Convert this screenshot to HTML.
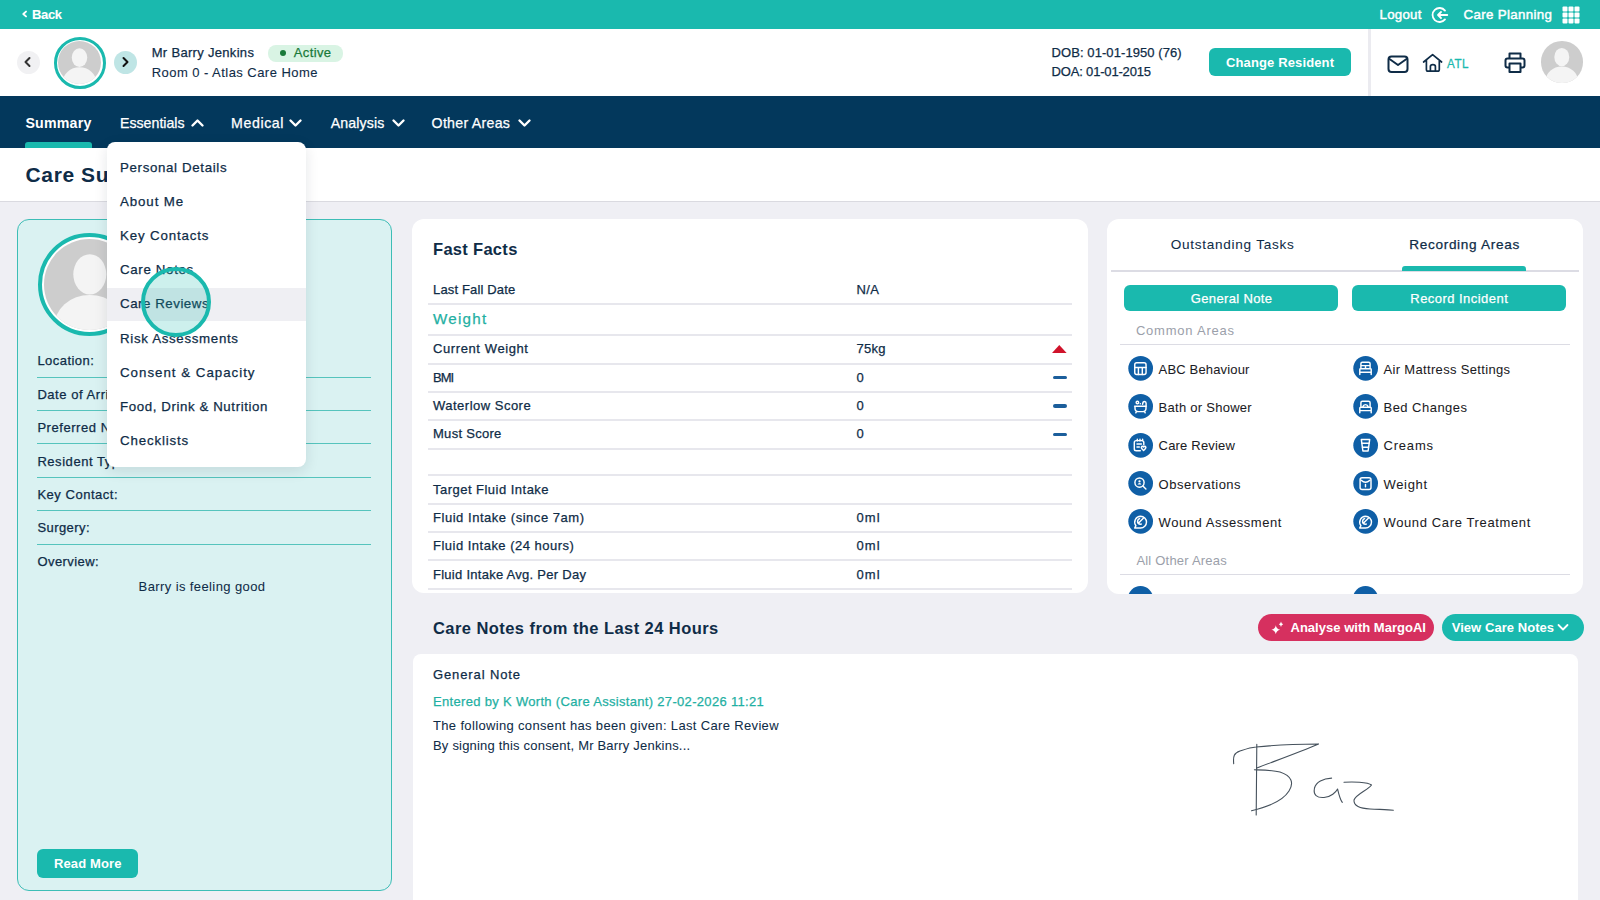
<!DOCTYPE html>
<html><head><meta charset="utf-8">
<style>
*{box-sizing:border-box;margin:0;padding:0}
html,body{width:1600px;height:900px;overflow:hidden}
body{position:relative;background:#efeff4;font-family:"Liberation Sans",sans-serif;color:#0f2c47}
.a{position:absolute}
.t{position:absolute;white-space:nowrap;line-height:1}
</style></head><body>
<div class="a" style="left:0px;top:0px;width:1600px;height:29px;background:#1ab9ae"></div>
<svg class="a" style="left:20px;top:9px;" width="10" height="10" viewBox="0 0 10 10"><polyline points="6,2.6 3.3,5 6,7.4" fill="none" stroke="#fff" stroke-width="1.9" stroke-linecap="round" stroke-linejoin="round"/></svg>
<div class="t" style="left:32.00px;top:8.00px;font-size:13px;letter-spacing:-0.367px;font-weight:bold;color:#fff;-webkit-text-stroke:0.1px currentColor">Back</div>
<div class="t" style="left:1379.50px;top:8.00px;font-size:13.3px;letter-spacing:0.260px;color:#fff;-webkit-text-stroke:0.45px currentColor">Logout</div>
<svg class="a" style="left:1431px;top:6px;" width="18" height="18" viewBox="0 0 18 18"><path d="M14 4.6A7 7 0 1 0 14 13.4" fill="none" stroke="#fff" stroke-width="1.8" stroke-linecap="round"/><path d="M16.3 9H7M10 6L7 9L10 12" fill="none" stroke="#fff" stroke-width="1.8" stroke-linecap="round" stroke-linejoin="round"/></svg>
<div class="t" style="left:1463.50px;top:8.00px;font-size:13.3px;letter-spacing:0.350px;color:#fff;-webkit-text-stroke:0.45px currentColor">Care Planning</div>
<svg class="a" style="left:1562px;top:6px;" width="18" height="18" viewBox="0 0 18 18"><rect x="0.5" y="0.5" width="5" height="5" rx="1" fill="#fff"/><rect x="6.5" y="0.5" width="5" height="5" rx="1" fill="#fff"/><rect x="12.5" y="0.5" width="5" height="5" rx="1" fill="#fff"/><rect x="0.5" y="6.5" width="5" height="5" rx="1" fill="#fff"/><rect x="6.5" y="6.5" width="5" height="5" rx="1" fill="#fff"/><rect x="12.5" y="6.5" width="5" height="5" rx="1" fill="#fff"/><rect x="0.5" y="12.5" width="5" height="5" rx="1" fill="#fff"/><rect x="6.5" y="12.5" width="5" height="5" rx="1" fill="#fff"/><rect x="12.5" y="12.5" width="5" height="5" rx="1" fill="#fff"/></svg>
<div class="a" style="left:0px;top:29px;width:1600px;height:67px;background:#fff"></div>
<div class="a" style="left:1368px;top:29px;width:3px;height:67px;background:#ebebf0"></div>
<div class="a" style="left:16.5px;top:50.5px;width:23.0px;height:23.0px;background:#f1f1f3;border-radius:50%"></div>
<svg class="a" style="left:22px;top:56px;" width="12" height="12" viewBox="0 0 12 12"><polyline points="7.5,2 3.5,6 7.5,10" fill="none" stroke="#333" stroke-width="2" stroke-linecap="round" stroke-linejoin="round"/></svg>
<div class="a" style="left:114px;top:50.5px;width:23px;height:23.0px;background:#bfe5e5;border-radius:50%"></div>
<svg class="a" style="left:119px;top:56px;" width="12" height="12" viewBox="0 0 12 12"><polyline points="4.5,2 8.5,6 4.5,10" fill="none" stroke="#111" stroke-width="2" stroke-linecap="round" stroke-linejoin="round"/></svg>
<div class="a" style="left:53.50px;top:36.80px;width:52.00px;height:52.00px;border-radius:50%;border:3px solid #1ab9ae;background:#fff"></div>
<div class="a" style="left:58.00px;top:41.30px;width:43.00px;height:43.00px;border-radius:50%;overflow:hidden;background:#cdcdcd"><svg width="43.00" height="43.00" style="display:block" fill="#f4f4f4"><ellipse cx="21.5" cy="16.598" rx="7.74" ry="9.459999999999999"/><ellipse cx="21.5" cy="41.28" rx="16.77" ry="15.049999999999999"/></svg></div>
<div class="t" style="left:151.70px;top:46.00px;font-size:13px;letter-spacing:0.313px;-webkit-text-stroke:0.25px currentColor">Mr Barry Jenkins</div>
<div class="a" style="left:268px;top:44.6px;width:75px;height:17.0px;background:#d9f4e4;border-radius:8px"></div>
<div class="a" style="left:280px;top:50.3px;width:6px;height:6.0px;background:#1a7a3a;border-radius:50%"></div>
<div class="t" style="left:293.80px;top:46.00px;font-size:13px;letter-spacing:0.360px;color:#1a7a3a;-webkit-text-stroke:0.25px currentColor">Active</div>
<div class="t" style="left:151.70px;top:66.00px;font-size:13px;letter-spacing:0.452px;-webkit-text-stroke:0.1px currentColor">Room 0 - Atlas Care Home</div>
<div class="t" style="left:1051.60px;top:46.00px;font-size:13px;letter-spacing:0.074px;-webkit-text-stroke:0.25px currentColor">DOB: 01-01-1950 (76)</div>
<div class="t" style="left:1051.60px;top:65.00px;font-size:13px;letter-spacing:-0.179px;-webkit-text-stroke:0.25px currentColor">DOA: 01-01-2015</div>
<div class="a" style="left:1209px;top:48px;width:142px;height:28.400000000000006px;background:#1ab9ae;border-radius:6px"></div>
<div class="t" style="left:1226.00px;top:56.00px;font-size:13px;letter-spacing:0.129px;font-weight:bold;color:#fff">Change Resident</div>
<svg class="a" style="left:1386px;top:53px;" width="24" height="22" viewBox="0 0 24 22"><rect x="2.5" y="3.5" width="19" height="15.5" rx="3" fill="none" stroke="#0f2c47" stroke-width="2"/><polyline points="3.5,6 12,12 20.5,6" fill="none" stroke="#0f2c47" stroke-width="2" stroke-linejoin="round" stroke-linecap="round"/></svg>
<svg class="a" style="left:1421px;top:52px;" width="23" height="22" viewBox="0 0 23 22"><path d="M2.6 10L11.6 2.6L20.6 10M5.4 8.2V17.4Q5.4 19.1 7.1 19.1H16.6Q18.3 19.1 18.3 17.4V8.2" fill="none" stroke="#0f2c47" stroke-width="1.7" stroke-linejoin="round" stroke-linecap="round"/><path d="M9.4 19.1V14.5Q9.4 12.6 11.9 12.6Q14.4 12.6 14.4 14.5V19.1" fill="none" stroke="#0f2c47" stroke-width="1.7"/></svg>
<div class="t" style="left:1447px;top:57px;font-size:13.5px;letter-spacing:0.6px;color:#1ab9ae;-webkit-text-stroke:0.3px currentColor;transform:scaleX(0.86);transform-origin:0 0">ATL</div>
<svg class="a" style="left:1503px;top:51px;" width="24" height="23" viewBox="0 0 24 23"><path d="M6.5 7.5V2.5H17.5V7.5" fill="none" stroke="#0f2c47" stroke-width="2" stroke-linejoin="round"/><path d="M6 16.5H4.5Q2.5 16.5 2.5 14.5V9.5Q2.5 7.5 4.5 7.5H19.5Q21.5 7.5 21.5 9.5V14.5Q21.5 16.5 19.5 16.5H18" fill="none" stroke="#0f2c47" stroke-width="2" stroke-linejoin="round"/><rect x="6.5" y="12.5" width="11" height="8.5" fill="none" stroke="#0f2c47" stroke-width="2" stroke-linejoin="round"/></svg>
<div class="a" style="left:1541.40px;top:41.30px;width:41.60px;height:41.60px;border-radius:50%;overflow:hidden;background:#cdcdcd"><svg width="41.60" height="41.60" style="display:block" fill="#f4f4f4"><ellipse cx="20.8" cy="16.0576" rx="7.488" ry="9.152000000000001"/><ellipse cx="20.8" cy="39.93600000000001" rx="16.224" ry="14.56"/></svg></div>
<div class="a" style="left:0px;top:96px;width:1600px;height:52px;background:#03385c"></div>
<div class="t" style="left:25.40px;top:116.00px;font-size:14.2px;letter-spacing:0.217px;font-weight:bold;color:#fff">Summary</div>
<div class="a" style="left:25px;top:142.3px;width:66.5px;height:5.699999999999989px;background:#1ab9ae;border-radius:3px 3px 0 0"></div>
<div class="t" style="left:120.00px;top:116.00px;font-size:14.2px;letter-spacing:-0.011px;color:#fff;-webkit-text-stroke:0.25px currentColor">Essentials</div>
<svg class="a" style="left:190px;top:117px;" width="15" height="11" viewBox="0 0 15 11"><polyline points="2.5,8.5 7.5,3.5 12.5,8.5" fill="none" stroke="#fff" stroke-width="2.4" stroke-linecap="round" stroke-linejoin="round"/></svg>
<div class="t" style="left:231.00px;top:116.00px;font-size:14.2px;letter-spacing:0.600px;color:#fff;-webkit-text-stroke:0.25px currentColor">Medical</div>
<svg class="a" style="left:288.3px;top:117px;" width="15" height="11" viewBox="0 0 15 11"><polyline points="2.5,3.5 7.5,8.5 12.5,3.5" fill="none" stroke="#fff" stroke-width="2.4" stroke-linecap="round" stroke-linejoin="round"/></svg>
<div class="t" style="left:330.80px;top:116.00px;font-size:14.2px;letter-spacing:0.086px;color:#fff;-webkit-text-stroke:0.25px currentColor">Analysis</div>
<svg class="a" style="left:390.5px;top:117px;" width="15" height="11" viewBox="0 0 15 11"><polyline points="2.5,3.5 7.5,8.5 12.5,3.5" fill="none" stroke="#fff" stroke-width="2.4" stroke-linecap="round" stroke-linejoin="round"/></svg>
<div class="t" style="left:431.60px;top:116.00px;font-size:14.2px;letter-spacing:0.260px;color:#fff;-webkit-text-stroke:0.25px currentColor">Other Areas</div>
<svg class="a" style="left:516.5px;top:117px;" width="15" height="11" viewBox="0 0 15 11"><polyline points="2.5,3.5 7.5,8.5 12.5,3.5" fill="none" stroke="#fff" stroke-width="2.4" stroke-linecap="round" stroke-linejoin="round"/></svg>
<div class="a" style="left:0px;top:148px;width:1600px;height:54px;background:#fff;border-bottom:1px solid #dadae0"></div>
<div class="t" style="left:25.60px;top:164.00px;font-size:21px;font-weight:bold;color:#0f2c47;letter-spacing:0.6px">Care Summary</div>
<div class="a" style="left:16.5px;top:219.3px;width:375.0px;height:672.2px;background:#daf2f2;border:1px solid #3dbdb6;border-radius:12px"></div>
<div class="a" style="left:37.50px;top:232.80px;width:103.60px;height:103.60px;border-radius:50%;border:4px solid #1ab9ae;background:#fff"></div>
<div class="a" style="left:43.50px;top:238.80px;width:91.60px;height:91.60px;border-radius:50%;overflow:hidden;background:#cdcdcd"><svg width="91.60" height="91.60" style="display:block" fill="#f4f4f4"><ellipse cx="45.8" cy="35.3576" rx="16.488" ry="20.151999999999997"/><ellipse cx="45.8" cy="87.93599999999999" rx="35.724" ry="32.059999999999995"/></svg></div>
<div class="t" style="left:37.40px;top:354.00px;font-size:13px;letter-spacing:0.450px;-webkit-text-stroke:0.25px currentColor">Location:</div>
<div class="t" style="left:37.40px;top:388.00px;font-size:13px;-webkit-text-stroke:0.25px currentColor;letter-spacing:0.55px">Date of Arrival:</div>
<div class="t" style="left:37.40px;top:421.00px;font-size:13px;-webkit-text-stroke:0.25px currentColor;letter-spacing:0.55px">Preferred Name:</div>
<div class="t" style="left:37.40px;top:455.00px;font-size:13px;-webkit-text-stroke:0.25px currentColor;letter-spacing:0.55px">Resident Type:</div>
<div class="t" style="left:37.40px;top:488.00px;font-size:13px;letter-spacing:0.518px;-webkit-text-stroke:0.25px currentColor">Key Contact:</div>
<div class="t" style="left:37.40px;top:521.00px;font-size:13px;letter-spacing:0.429px;-webkit-text-stroke:0.25px currentColor">Surgery:</div>
<div class="t" style="left:37.40px;top:555.00px;font-size:13px;letter-spacing:0.438px;-webkit-text-stroke:0.25px currentColor">Overview:</div>
<div class="a" style="left:37px;top:377px;width:334px;height:1px;background:#55c4bd"></div>
<div class="a" style="left:37px;top:410px;width:334px;height:1px;background:#55c4bd"></div>
<div class="a" style="left:37px;top:443px;width:334px;height:1px;background:#55c4bd"></div>
<div class="a" style="left:37px;top:477px;width:334px;height:1px;background:#55c4bd"></div>
<div class="a" style="left:37px;top:510px;width:334px;height:1px;background:#55c4bd"></div>
<div class="a" style="left:37px;top:544px;width:334px;height:1px;background:#55c4bd"></div>
<div class="t" style="left:138.60px;top:580.00px;font-size:13px;letter-spacing:0.395px;-webkit-text-stroke:0.05px currentColor">Barry is feeling good</div>
<div class="a" style="left:37.3px;top:849px;width:100.7px;height:28.5px;background:#1ab9ae;border-radius:6px"></div>
<div class="t" style="left:54.00px;top:857.00px;font-size:13px;letter-spacing:0.113px;font-weight:bold;color:#fff">Read More</div>
<div class="a" style="left:412.4px;top:219.2px;width:675.1999999999999px;height:374.3px;background:#fff;border-radius:12px"></div>
<div class="t" style="left:433.00px;top:241.00px;font-size:16.5px;letter-spacing:0.300px;font-weight:bold;color:#0f2c47">Fast Facts</div>
<div class="t" style="left:433.00px;top:283.00px;font-size:13px;letter-spacing:0.154px;-webkit-text-stroke:0.25px currentColor">Last Fall Date</div>
<div class="t" style="left:856.40px;top:283.00px;font-size:13px;letter-spacing:0.450px;-webkit-text-stroke:0.25px currentColor">N/A</div>
<div class="t" style="left:433.00px;top:342.00px;font-size:13px;letter-spacing:0.600px;-webkit-text-stroke:0.25px currentColor">Current Weight</div>
<div class="t" style="left:856.40px;top:342.00px;font-size:13px;letter-spacing:0.333px;-webkit-text-stroke:0.25px currentColor">75kg</div>
<div class="t" style="left:433.00px;top:371.00px;font-size:13px;letter-spacing:-1.000px;-webkit-text-stroke:0.25px currentColor">BMI</div>
<div class="t" style="left:856.40px;top:371.00px;font-size:13px;-webkit-text-stroke:0.25px currentColor">0</div>
<div class="t" style="left:433.00px;top:399.00px;font-size:13px;letter-spacing:0.492px;-webkit-text-stroke:0.25px currentColor">Waterlow Score</div>
<div class="t" style="left:856.40px;top:399.00px;font-size:13px;-webkit-text-stroke:0.25px currentColor">0</div>
<div class="t" style="left:433.00px;top:427.00px;font-size:13px;letter-spacing:0.289px;-webkit-text-stroke:0.25px currentColor">Must Score</div>
<div class="t" style="left:856.40px;top:427.00px;font-size:13px;-webkit-text-stroke:0.25px currentColor">0</div>
<div class="t" style="left:433.00px;top:483.00px;font-size:13px;letter-spacing:0.478px;-webkit-text-stroke:0.25px currentColor">Target Fluid Intake</div>
<div class="t" style="left:433.00px;top:511.00px;font-size:13px;letter-spacing:0.535px;-webkit-text-stroke:0.25px currentColor">Fluid Intake (since 7am)</div>
<div class="t" style="left:856.40px;top:511.00px;font-size:13px;letter-spacing:1.150px;-webkit-text-stroke:0.25px currentColor">0ml</div>
<div class="t" style="left:433.00px;top:539.00px;font-size:13px;letter-spacing:0.491px;-webkit-text-stroke:0.25px currentColor">Fluid Intake (24 hours)</div>
<div class="t" style="left:856.40px;top:539.00px;font-size:13px;letter-spacing:1.150px;-webkit-text-stroke:0.25px currentColor">0ml</div>
<div class="t" style="left:433.00px;top:568.00px;font-size:13px;letter-spacing:0.271px;-webkit-text-stroke:0.25px currentColor">Fluid Intake Avg. Per Day</div>
<div class="t" style="left:856.40px;top:568.00px;font-size:13px;letter-spacing:1.150px;-webkit-text-stroke:0.25px currentColor">0ml</div>
<div class="t" style="left:433.00px;top:311.00px;font-size:15.2px;letter-spacing:1.240px;color:#1fb0a3;-webkit-text-stroke:0.25px currentColor">Weight</div>
<div class="a" style="left:428px;top:303px;width:644px;height:2px;background:#e7e7ed"></div>
<div class="a" style="left:428px;top:334px;width:644px;height:2px;background:#e7e7ed"></div>
<div class="a" style="left:428px;top:363px;width:644px;height:2px;background:#e7e7ed"></div>
<div class="a" style="left:428px;top:391px;width:644px;height:2px;background:#e7e7ed"></div>
<div class="a" style="left:428px;top:419px;width:644px;height:2px;background:#e7e7ed"></div>
<div class="a" style="left:428px;top:448px;width:644px;height:2px;background:#e7e7ed"></div>
<div class="a" style="left:428px;top:474px;width:644px;height:2px;background:#e7e7ed"></div>
<div class="a" style="left:428px;top:503px;width:644px;height:2px;background:#e7e7ed"></div>
<div class="a" style="left:428px;top:531px;width:644px;height:2px;background:#e7e7ed"></div>
<div class="a" style="left:428px;top:559px;width:644px;height:2px;background:#e7e7ed"></div>
<div class="a" style="left:428px;top:588px;width:644px;height:2px;background:#e7e7ed"></div>
<svg class="a" style="left:1051px;top:344px;" width="17" height="10" viewBox="0 0 17 10"><polygon points="1,9 8.3,1 15.6,9" fill="#d0132b"/></svg>
<div class="a" style="left:1053px;top:375.7px;width:13.599999999999909px;height:3.6000000000000227px;background:#1b5e9b;border-radius:2px"></div>
<div class="a" style="left:1053px;top:404.2px;width:13.599999999999909px;height:3.6000000000000227px;background:#1b5e9b;border-radius:2px"></div>
<div class="a" style="left:1053px;top:432.5px;width:13.599999999999909px;height:3.6000000000000227px;background:#1b5e9b;border-radius:2px"></div>
<div class="a" style="left:1106.75px;top:219px;width:476px;height:374.5px;background:#fff;border-radius:12px;overflow:hidden">
<div class="t" style="left:63.95px;top:19.00px;font-size:13.6px;letter-spacing:0.719px;-webkit-text-stroke:0.05px currentColor">Outstanding Tasks</div>
<div class="t" style="left:302.45px;top:19.00px;font-size:13.6px;letter-spacing:0.686px;-webkit-text-stroke:0.25px currentColor">Recording Areas</div>
<div class="a" style="left:4.25px;top:51px;width:468.0px;height:2px;background:#dcdce4"></div>
<div class="a" style="left:294.85px;top:47px;width:124.09999999999997px;height:5px;background:#1ab9ae;border-radius:3px 3px 0 0"></div>
<div class="a" style="left:17.55px;top:66px;width:213.7px;height:25.700000000000003px;background:#1ab9ae;border-radius:6px"></div>
<div class="t" style="left:84.05px;top:73.00px;font-size:13px;letter-spacing:0.355px;color:#fff;-webkit-text-stroke:0.25px currentColor">General Note</div>
<div class="a" style="left:244.85px;top:66px;width:214.20000000000002px;height:25.700000000000003px;background:#1ab9ae;border-radius:6px"></div>
<div class="t" style="left:303.55px;top:73.00px;font-size:13px;letter-spacing:0.457px;color:#fff;-webkit-text-stroke:0.25px currentColor">Record Incident</div>
<div class="t" style="left:29.15px;top:105.00px;font-size:13px;letter-spacing:0.773px;color:#9ba0aa">Common Areas</div>
<div class="a" style="left:13.25px;top:124.5px;width:450.0px;height:1.0px;background:#dcdce4"></div>
<div class="t" style="left:51.85px;top:144.00px;font-size:13px;letter-spacing:0.158px;color:#1b1b24;-webkit-text-stroke:0.05px currentColor">ABC Behaviour</div>
<div class="t" style="left:276.75px;top:144.00px;font-size:13px;letter-spacing:0.330px;color:#1b1b24;-webkit-text-stroke:0.05px currentColor">Air Mattress Settings</div>
<div class="t" style="left:51.85px;top:182.00px;font-size:13px;letter-spacing:0.269px;color:#1b1b24;-webkit-text-stroke:0.05px currentColor">Bath or Shower</div>
<div class="t" style="left:276.75px;top:182.00px;font-size:13px;letter-spacing:0.470px;color:#1b1b24;-webkit-text-stroke:0.05px currentColor">Bed Changes</div>
<div class="t" style="left:51.85px;top:220.00px;font-size:13px;letter-spacing:0.190px;color:#1b1b24;-webkit-text-stroke:0.05px currentColor">Care Review</div>
<div class="t" style="left:276.75px;top:220.00px;font-size:13px;letter-spacing:0.800px;color:#1b1b24;-webkit-text-stroke:0.05px currentColor">Creams</div>
<div class="t" style="left:51.85px;top:259.00px;font-size:13px;letter-spacing:0.491px;color:#1b1b24;-webkit-text-stroke:0.05px currentColor">Observations</div>
<div class="t" style="left:276.75px;top:259.00px;font-size:13px;letter-spacing:0.660px;color:#1b1b24;-webkit-text-stroke:0.05px currentColor">Weight</div>
<div class="t" style="left:51.85px;top:297.00px;font-size:13px;letter-spacing:0.540px;color:#1b1b24;-webkit-text-stroke:0.05px currentColor">Wound Assessment</div>
<div class="t" style="left:276.75px;top:297.00px;font-size:13px;letter-spacing:0.626px;color:#1b1b24;-webkit-text-stroke:0.05px currentColor">Wound Care Treatment</div>
<div class="t" style="left:29.65px;top:335.00px;font-size:13px;letter-spacing:0.207px;color:#9ba0aa">All Other Areas</div>
<div class="a" style="left:13.25px;top:354.5px;width:450.0px;height:1.0px;background:#dcdce4"></div>
<div class="a" style="left:21.45px;top:367px;width:24.8px;height:24.80000000000001px;background:#0f5fa6;border-radius:50%"></div>
<div class="a" style="left:246.55px;top:367px;width:24.80000000000001px;height:24.80000000000001px;background:#0f5fa6;border-radius:50%"></div>
</div>
<svg class="a" style="left:1126px;top:354.0px;" width="30" height="30" viewBox="0 0 30 30"><circle cx="14.65" cy="14.35" r="12.35" fill="#0f5fa6"/><rect x="8.75" y="8.75" width="11.3" height="11.7" rx="2" fill="none" stroke="#fff" stroke-width="1.45" stroke-linecap="round" stroke-linejoin="round"/><path d="M8.75 13.4H20.05M12.4 13.4V20.4M16.3 13.4V20.4" fill="none" stroke="#fff" stroke-width="1.45" stroke-linecap="round" stroke-linejoin="round"/></svg>
<svg class="a" style="left:1351px;top:354.0px;" width="30" height="30" viewBox="0 0 30 30"><circle cx="14.65" cy="14.35" r="12.35" fill="#0f5fa6"/><path d="M9.9 14.8V9.7Q9.9 8.3 11.3 8.3H17.7Q19.1 8.3 19.1 9.7V14.8M9.9 11.6H19.1M14.5 11.6V14.8M8.8 20.6V15.5Q8.8 14.8 9.5 14.8H19.5Q20.2 14.8 20.2 15.5V20.6M8.8 18.2H20.2" fill="none" stroke="#fff" stroke-width="1.45" stroke-linecap="round" stroke-linejoin="round"/></svg>
<svg class="a" style="left:1126px;top:392.1px;" width="30" height="30" viewBox="0 0 30 30"><circle cx="14.65" cy="14.35" r="12.35" fill="#0f5fa6"/><path d="M8.6 14.3H20.4M9 14.3V16.3Q9 19.6 12.2 19.6H16.8Q20 19.6 20 16.3V14.3M10.6 19.4L9.8 20.8M18.4 19.4L19.2 20.8M16.6 12.2Q16.8 9.4 18.5 9.4Q20.1 9.4 20.1 11.2V14.3" fill="none" stroke="#fff" stroke-width="1.45" stroke-linecap="round" stroke-linejoin="round"/><circle cx="11.4" cy="10.4" r="1.25" fill="none" stroke="#fff" stroke-width="1.45" stroke-linecap="round" stroke-linejoin="round" stroke-width="1.2"/><circle cx="14.3" cy="11.7" r="0.75" fill="#fff"/></svg>
<svg class="a" style="left:1351px;top:392.1px;" width="30" height="30" viewBox="0 0 30 30"><circle cx="14.65" cy="14.35" r="12.35" fill="#0f5fa6"/><path d="M9.9 15V10.8Q9.9 9.3 11.4 9.3H17.6Q19.1 9.3 19.1 10.8V15M11.8 14.8Q12.4 12.6 14.5 12.6Q16.6 12.6 17.2 14.8M8.8 20.8V16Q8.8 15.2 9.6 15.2H19.4Q20.2 15.2 20.2 16V20.8M8.8 18.6H20.2" fill="none" stroke="#fff" stroke-width="1.45" stroke-linecap="round" stroke-linejoin="round"/></svg>
<svg class="a" style="left:1126px;top:430.55px;" width="30" height="30" viewBox="0 0 30 30"><circle cx="14.65" cy="14.35" r="12.35" fill="#0f5fa6"/><path d="M17.8 13.8V11.5Q17.8 9.6 15.9 9.6H10.2Q8.3 9.6 8.3 11.5V17.9Q8.3 19.7 10.2 19.7H14.3M11.3 8.2V10M14 8.2V10M16.6 8.2V10M11 13H15.4M11 15.9H13.3" fill="none" stroke="#fff" stroke-width="1.45" stroke-linecap="round" stroke-linejoin="round"/><path d="M17.6 19.5L15.9 17.8Q15.1 17 15.4 16.1Q15.9 15.1 17 15.4L17.6 15.9L18.2 15.4Q19.3 15.1 19.8 16.1Q20.1 17 19.3 17.8Z" fill="none" stroke="#fff" stroke-width="1.45" stroke-linecap="round" stroke-linejoin="round" stroke-width="1.3"/></svg>
<svg class="a" style="left:1351px;top:430.55px;" width="30" height="30" viewBox="0 0 30 30"><circle cx="14.65" cy="14.35" r="12.35" fill="#0f5fa6"/><path d="M10.3 8.4H18.7L17.1 20H11.9Z" fill="none" stroke="#fff" stroke-width="1.45" stroke-linecap="round" stroke-linejoin="round"/><path d="M10.9 12.2H18.1" fill="none" stroke="#fff" stroke-width="1.45" stroke-linecap="round" stroke-linejoin="round" stroke-width="1.5"/><path d="M11.5 16.2H17.5" fill="none" stroke="#fff" stroke-width="1.45" stroke-linecap="round" stroke-linejoin="round" stroke-width="2.3"/></svg>
<svg class="a" style="left:1126px;top:468.9px;" width="30" height="30" viewBox="0 0 30 30"><circle cx="14.65" cy="14.35" r="12.35" fill="#0f5fa6"/><circle cx="13.5" cy="13.6" r="4.6" fill="none" stroke="#fff" stroke-width="1.45" stroke-linecap="round" stroke-linejoin="round"/><path d="M16.9 17L19.9 20" fill="none" stroke="#fff" stroke-width="1.45" stroke-linecap="round" stroke-linejoin="round"/><circle cx="13.5" cy="12.4" r="1.15" fill="#fff"/><path d="M11.6 15.6Q11.9 14.1 13.5 14.1Q15.1 14.1 15.4 15.6Z" fill="#fff"/></svg>
<svg class="a" style="left:1351px;top:468.9px;" width="30" height="30" viewBox="0 0 30 30"><circle cx="14.65" cy="14.35" r="12.35" fill="#0f5fa6"/><rect x="9.1" y="8.8" width="10.9" height="11.6" rx="2" fill="none" stroke="#fff" stroke-width="1.45" stroke-linecap="round" stroke-linejoin="round"/><path d="M10.2 11.2Q14.5 15.2 18.9 11.2M14.5 15.4V17.8" fill="none" stroke="#fff" stroke-width="1.45" stroke-linecap="round" stroke-linejoin="round"/></svg>
<svg class="a" style="left:1126px;top:506.9px;" width="30" height="30" viewBox="0 0 30 30"><circle cx="14.65" cy="14.35" r="12.35" fill="#0f5fa6"/><path d="M14.6 9.2A5.9 5.9 0 1 1 14.6 21H8.7L9.9 18.6A5.9 5.9 0 0 1 14.6 9.2Z" fill="none" stroke="#fff" stroke-width="1.45" stroke-linecap="round" stroke-linejoin="round"/><path d="M13.6 11.6Q11.4 12.3 11.6 15Q12.2 17.6 15.3 17.1M13.1 15.4L17.3 11.3" fill="none" stroke="#fff" stroke-width="1.45" stroke-linecap="round" stroke-linejoin="round"/></svg>
<svg class="a" style="left:1351px;top:506.9px;" width="30" height="30" viewBox="0 0 30 30"><circle cx="14.65" cy="14.35" r="12.35" fill="#0f5fa6"/><path d="M14.6 9.2A5.9 5.9 0 1 1 14.6 21H8.7L9.9 18.6A5.9 5.9 0 0 1 14.6 9.2Z" fill="none" stroke="#fff" stroke-width="1.45" stroke-linecap="round" stroke-linejoin="round"/><path d="M13.6 11.6Q11.4 12.3 11.6 15Q12.2 17.6 15.3 17.1M13.1 15.4L17.3 11.3" fill="none" stroke="#fff" stroke-width="1.45" stroke-linecap="round" stroke-linejoin="round"/></svg>
<div class="t" style="left:433.00px;top:620.00px;font-size:16.5px;letter-spacing:0.433px;font-weight:bold;color:#0f2c47">Care Notes from the Last 24 Hours</div>
<div class="a" style="left:1258.3px;top:614.2px;width:175.5px;height:26.699999999999932px;background:#d6305f;border-radius:14px"></div>
<svg class="a" style="left:1270px;top:620px;" width="14" height="14" viewBox="0 0 14 14"><path d="M5.8 5.2Q6.4 9 10.2 9.8Q6.4 10.6 5.8 14.2Q5.2 10.6 1.4 9.8Q5.2 9 5.8 5.2Z" fill="#fff"/><path d="M11 1.6Q11.3 3.9 13.2 4.3Q11.3 4.7 11 7Q10.7 4.7 8.8 4.3Q10.7 3.9 11 1.6Z" fill="#fff"/></svg>
<div class="t" style="left:1290.50px;top:621.00px;font-size:13px;letter-spacing:0.021px;font-weight:bold;color:#fff">Analyse with MargoAI</div>
<div class="a" style="left:1442px;top:614.2px;width:141.5999999999999px;height:26.699999999999932px;background:#1ab9ae;border-radius:14px"></div>
<div class="t" style="left:1451.70px;top:621.00px;font-size:13px;letter-spacing:0.050px;font-weight:bold;color:#fff">View Care Notes</div>
<svg class="a" style="left:1557px;top:623px;" width="12" height="9" viewBox="0 0 12 9"><polyline points="1.5,2 6,6.5 10.5,2" fill="none" stroke="#fff" stroke-width="1.8" stroke-linecap="round" stroke-linejoin="round"/></svg>
<div class="a" style="left:413px;top:654.3px;width:1165px;height:265.70000000000005px;background:#fff;border-radius:8px"></div>
<div class="t" style="left:433.00px;top:668.00px;font-size:13px;letter-spacing:0.882px;-webkit-text-stroke:0.25px currentColor">General Note</div>
<div class="t" style="left:433.00px;top:695.00px;font-size:13px;letter-spacing:0.317px;color:#1fb0a3;-webkit-text-stroke:0.25px currentColor">Entered by K Worth (Care Assistant) 27-02-2026 11:21</div>
<div class="t" style="left:433.00px;top:719.00px;font-size:13px;letter-spacing:0.344px;-webkit-text-stroke:0.05px currentColor">The following consent has been given: Last Care Review</div>
<div class="t" style="left:433.00px;top:739.00px;font-size:13px;letter-spacing:0.198px;-webkit-text-stroke:0.05px currentColor">By signing this consent, Mr Barry Jenkins...</div>
<svg class="a" style="left:0;top:0" width="1600" height="900" viewBox="0 0 1600 900"><g fill="none" stroke="#45515c" stroke-width="1.1" stroke-linecap="round" stroke-linejoin="round">
<path d="M1256.8 744.3L1256.2 814.9"/>
<path d="M1233.7 763.8C1233 756 1234 753 1240 751C1246 749 1250 747.5 1256 747C1270 745.5 1290 744.2 1318.6 744C1300 752 1275 761 1256.8 768"/>
<path d="M1254.4 769.8C1262 770 1272 770 1280 772C1292 776 1294 783 1289 791C1284 799 1272 806 1251.5 810.8"/>
<path d="M1331.6 778.1C1323 778.5 1316 782 1314.5 788C1313 795 1317 798 1324 797.5C1331 797 1336 792 1337.6 789C1339 795 1340.5 800 1342.3 802.4"/>
<path d="M1344 782.3C1352 781.5 1368 782 1371.5 785C1368 790 1356 794 1354 800C1353.5 806 1360 808.5 1370 809C1380 809.5 1388 809.5 1393.4 810.2"/>
</g></svg>
<div class="a" style="left:107px;top:142.3px;width:199px;height:324.7px;background:#fff;border-radius:8px;box-shadow:0 4px 14px rgba(20,30,50,0.11)"></div>
<div class="a" style="left:107px;top:288px;width:199px;height:33.30000000000001px;background:#efeff3"></div>
<div class="t" style="left:120.00px;top:161.00px;font-size:13.3px;letter-spacing:0.653px;-webkit-text-stroke:0.25px currentColor">Personal Details</div>
<div class="t" style="left:120.00px;top:195.00px;font-size:13.3px;letter-spacing:0.900px;-webkit-text-stroke:0.25px currentColor">About Me</div>
<div class="t" style="left:120.00px;top:229.00px;font-size:13.3px;letter-spacing:0.855px;-webkit-text-stroke:0.25px currentColor">Key Contacts</div>
<div class="t" style="left:120.00px;top:263.00px;font-size:13.3px;letter-spacing:0.667px;-webkit-text-stroke:0.25px currentColor">Care Notes</div>
<div class="t" style="left:120.00px;top:297.00px;font-size:13.3px;letter-spacing:0.527px;-webkit-text-stroke:0.25px currentColor">Care Reviews</div>
<div class="t" style="left:120.00px;top:332.00px;font-size:13.3px;letter-spacing:0.673px;-webkit-text-stroke:0.25px currentColor">Risk Assessments</div>
<div class="t" style="left:120.00px;top:366.00px;font-size:13.3px;letter-spacing:1.000px;-webkit-text-stroke:0.25px currentColor">Consent &amp; Capacity</div>
<div class="t" style="left:120.00px;top:400.00px;font-size:13.3px;letter-spacing:0.586px;-webkit-text-stroke:0.25px currentColor">Food, Drink &amp; Nutrition</div>
<div class="t" style="left:120.00px;top:434.00px;font-size:13.3px;letter-spacing:0.844px;-webkit-text-stroke:0.25px currentColor">Checklists</div>
<svg class="a" style="left:139px;top:265.4px;" width="74" height="74" viewBox="0 0 74 74"><circle cx="37" cy="37" r="33" fill="rgba(26,185,174,0.22)" stroke="#1ab9ae" stroke-width="4"/></svg>
</body></html>
